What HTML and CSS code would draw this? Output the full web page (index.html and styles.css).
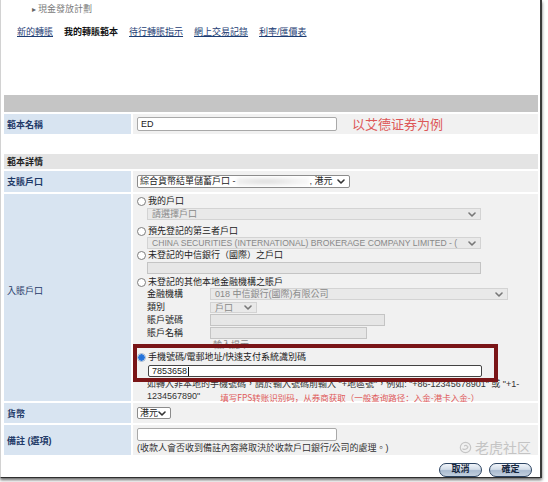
FILE: index.html
```html
<!DOCTYPE html>
<html>
<head>
<meta charset="utf-8">
<link rel="stylesheet" href="styles.css">
</head>
<body>
<div class="frame">
  <div class="crumb"><span class="tri">&#9656;</span>現金發放計劃</div>
  <nav class="tabs">
    <a class="tab">新的轉賬</a>
    <span class="tab cur">我的轉賬範本</span>
    <a class="tab">待行轉賬指示</a>
    <a class="tab">網上交易記錄</a>
    <a class="tab">利率/匯價表</a>
  </nav>

  <table class="form">
    <colgroup><col class="c1"><col class="c2"></colgroup>
    <tr class="hdr"><td colspan="2"></td></tr>
    <tr class="r-name">
      <th class="lbl">範本名稱</th>
      <td class="val"><div class="line"><span class="inp w200">ED</span><span class="ann">以艾德证券为例</span></div></td>
    </tr>
    <tr class="spacer"><td colspan="2"></td></tr>
    <tr class="sub"><td colspan="2">範本詳情</td></tr>
    <tr class="r-pay">
      <th class="lbl">支賬戶口</th>
      <td class="val">
        <div class="sel pay"><span class="seltxt">綜合貨幣結單儲蓄戶口 -<span class="blur"></span>, 港元</span><svg class="chev" viewBox="0 0 8 5" width="8" height="5"><polyline points="1,1 4,4 7,1"/></svg></div>
      </td>
    </tr>
    <tr class="r-recv">
      <th class="lbl recvl">入賬戶口</th>
      <td class="val top">
        <div class="recv">
          <div class="opt o1"><span class="rad"></span>我的戶口</div>
          <div class="box dis w334 b1"><span>請選擇戶口</span><svg class="chev lt" viewBox="0 0 8 5" width="8" height="5"><polyline points="1,1 4,4 7,1"/></svg></div>
          <div class="opt o2"><span class="rad"></span>預先登記的第三者戶口</div>
          <div class="box dis w334"><span class="lat">CHINA SECURITIES (INTERNATIONAL) BROKERAGE COMPANY LIMITED - (</span><svg class="chev lt" viewBox="0 0 8 5" width="8" height="5"><polyline points="1,1 4,4 7,1"/></svg></div>
          <div class="opt"><span class="rad"></span>未登記的中信銀行（國際）之戶口</div>
          <div class="box dis w334 b3"></div>
          <div class="opt o4"><span class="rad"></span>未登記的其他本地金融機構之賬戶</div>
          <div class="fi">
            <div class="fl">金融機構</div>
            <div class="box dis wfin"><span>018 中信銀行(國際)有限公司</span><svg class="chev lt" viewBox="0 0 8 5" width="8" height="5"><polyline points="1,1 4,4 7,1"/></svg></div>
            <div class="fl">類別</div>
            <div class="box dis wtype"><span>戶口</span><svg class="chev lt" viewBox="0 0 8 5" width="8" height="5"><polyline points="1,1 4,4 7,1"/></svg></div>
            <div class="fl">賬戶號碼</div>
            <div class="box dis wno"></div>
            <div class="fl">賬戶名稱</div>
            <div class="box dis wnm"></div>
          </div>
          <div class="tip">輸入提示</div>
          <div class="opt o5"><span class="rad on"></span>手機號碼/電郵地址/快速支付系統識別碼</div>
          <div class="fps"><span>7853658</span><span class="caret"></span></div>
          <div class="hint h1">如轉入非本地的手機號碼，請於輸入號碼前輸入 "+地區號"，例如: "+86-12345678901" 或 "+1-</div>
          <div class="hint h2">1234567890"<span class="ann2">填写FPS转账识别码，从券商获取（一般查询路径：入金-港卡入金-）</span></div>
          <div class="redbox"></div>
        </div>
      </td>
    </tr>
    <tr class="r-cur">
      <th class="lbl">貨幣</th>
      <td class="val"><div class="sel cur"><span>港元</span><svg class="chev" viewBox="0 0 8 5" width="8" height="5"><polyline points="1,1 4,4 7,1"/></svg></div></td>
    </tr>
    <tr class="r-rmk">
      <th class="lbl">備註 (選項)</th>
      <td class="val top">
        <div class="inp w200 rmk"></div>
        <div class="rmk-note">(收款人會否收到備註內容將取決於收款戶口銀行/公司的處理。)</div>
      </td>
    </tr>
  </table>

  <div class="btns">
    <span class="btn">取消</span>
    <span class="btn">確定</span>
  </div>

  <div class="wm">
    <svg viewBox="0 0 14 14" width="13" height="13"><circle cx="7" cy="7" r="5.6" fill="none" stroke="#c6c6c6" stroke-width="1.3"/><path d="M4.2 8.6 C5.5 9.6 8.6 9.2 9.6 6.4 M6 5.2 C7 4.4 8.4 4.6 8.8 5.6" fill="none" stroke="#c6c6c6" stroke-width="1.3" stroke-linecap="round"/></svg>
    <span>老虎社区</span>
  </div>
</div>
</body>
</html>
```

FILE: styles.css
```css
* { box-sizing: border-box; margin: 0; padding: 0; }
html, body { background: #fff; }
body {
  width: 548px;
  height: 482px;
  overflow: hidden;
  font-family: "Liberation Sans", "Noto Sans CJK TC", sans-serif;
  font-size: 9px;
  color: #222;
}
.frame {
  position: relative;
  width: 542px;
  height: 478px;
  border-left: 1px solid #d2d2d2;
  border-right: 2px solid #3a3a3a;
  border-bottom: 1px solid #2e2e2e;
  box-shadow: 0 2px 3px rgba(0, 0, 0, 0.6);
}
.crumb {
  height: 19px;
  line-height: 19px;
  padding-left: 31px;
  color: #7a7a7a;
  font-size: 9px;
}
.tri { color: #666; font-size: 8px; margin-right: 2px; }
.tabs {
  display: flex;
  gap: 11px;
  margin-top: 4px;
  height: 18px;
  line-height: 18px;
  padding-left: 16px;
}
.tab { color: #1d3d74; text-decoration: underline; }
.tab.cur { color: #111; text-decoration: none; font-weight: bold; }

.form {
  border-collapse: separate;
  border-spacing: 2px;
  table-layout: fixed;
  width: 538px;
  margin: 52px 0 0 1px;
}
.form col.c1 { width: 127px; }
.form col.c2 { width: 405px; }
.form th, .form td { padding: 0; }
.form .hdr td { height: 17px; background: #c5c5c5; }
.form .spacer td { height: 16px; background: #fff; }
.form .sub td {
  height: 15px;
  background: #e4e4e4;
  font-weight: bold;
  color: #1e1e1e;
  padding-left: 3px;
}
.form .lbl {
  background: #d8e4f1;
  color: #1f3a68;
  text-align: left;
  font-weight: bold;
  padding-left: 3px;
  vertical-align: middle;
}
.form .val { background: #f1f1f1; padding-left: 4px; vertical-align: middle; }
.form .val.top { vertical-align: top; }
.form .r-name td, .form .r-name th { height: 20px; }
.form .r-pay td, .form .r-pay th { height: 21px; }
.form .r-cur td, .form .r-cur th { height: 20px; }
.form .r-rmk td, .form .r-rmk th { height: 30px; }
.form .recvl { padding-bottom: 15px; font-weight: normal; color: #1f3a68; }

.line { display: flex; align-items: center; }
.inp {
  display: block;
  height: 14px;
  line-height: 12px;
  background: #fff;
  border: 1px solid #a9a9a9;
  border-radius: 2px;
  padding-left: 3px;
  color: #222;
}
.w200 { width: 200px; }
.ann {
  margin-left: 15px;
  font-family: "Noto Sans CJK SC", sans-serif;
  font-size: 13px;
  line-height: 14px;
  color: #dd5757;
}
.sel {
  display: flex;
  align-items: center;
  justify-content: space-between;
  height: 13px;
  background: #fff;
  border: 1px solid #8c8c8c;
  border-radius: 2px;
  padding: 0 4px 0 2px;
  line-height: 11px;
  white-space: nowrap;
  overflow: hidden;
}
.sel.pay { width: 213px; }
.sel.cur { width: 34px; height: 12px; }
.seltxt { display: flex; align-items: center; }
.blur {
  display: inline-block;
  width: 72px;
  height: 9px;
  margin: 0 1px;
  background: radial-gradient(ellipse at 40% 50%, #dcdcdc 0, #f4f4f4 60%, #fff 100%);
  filter: blur(1.5px);
}
.chev { flex: none; }
.chev polyline { fill: none; stroke: #333; stroke-width: 1.6; stroke-linecap: round; stroke-linejoin: round; }
.chev.lt polyline { stroke: #777; }

.recv { position: relative; padding-top: 1px; }
.opt {
  display: flex;
  align-items: center;
  height: 12px;
  line-height: 12px;
  white-space: nowrap;
  color: #222;
}
.o2 { margin-top: 5px; }
.o4 { margin-top: 2px; }
.rad {
  display: inline-block;
  flex: none;
  width: 9px;
  height: 9px;
  border: 1px solid #7d7d7d;
  border-radius: 50%;
  background: #fff;
  margin-right: 2px;
}
.rad.on {
  border-color: #9fb4d0;
  background: radial-gradient(circle, #1f6fd8 0, #2a78de 3px, #d6e4f6 3.6px);
}
.box {
  display: flex;
  align-items: center;
  justify-content: space-between;
  height: 12px;
  line-height: 10px;
  padding: 0 4px 0 4px;
  white-space: nowrap;
  overflow: hidden;
}
.dis { background: #e9e9e9; border: 1px solid #d3d3d3; color: #888; }
.b1 { margin-top: 1px; }
.b3 { margin-top: 1px; background: #e6e6e6; border-color: #c4c4c4; }
.w334 { width: 334px; margin-left: 10px; }
.lat { font-size: 8.6px; letter-spacing: 0; }
.fi {
  display: grid;
  grid-template-columns: 63px auto;
  grid-auto-rows: 13px;
  margin-left: 10px;
  align-items: start;
}
.fl { line-height: 13px; color: #222; }
.wfin { width: 298px; }
.wtype { width: 47px; height: 11px; margin-top: 1px; }
.wno { width: 175px; background: #e6e6e6; border-color: #c4c4c4; }
.wnm { width: 157px; background: #e6e6e6; border-color: #c4c4c4; }
.tip { height: 11px; line-height: 11px; padding-left: 76px; color: #888; }
.fps {
  display: flex;
  align-items: center;
  width: 334px;
  height: 12px;
  margin: 2px 0 0 11px;
  background: #fff;
  border: 1px solid #444;
  border-radius: 2px;
  padding-left: 3px;
  line-height: 10px;
}
.caret { display: inline-block; width: 1px; height: 9px; background: #111; margin-left: 1px; }
.hint { padding-left: 10px; color: #333; white-space: nowrap; }
.h1 { height: 12px; line-height: 12px; margin-top: 1px; }
.h2 { height: 11px; line-height: 11px; }
.ann2 {
  margin-left: 20px;
  font-family: "Noto Sans CJK SC", sans-serif;
  font-size: 8.5px;
  color: #df5a5a;
  position: relative;
  top: 2px;
}
.redbox {
  position: absolute;
  left: -4px;
  top: 150px;
  width: 365px;
  height: 38px;
  border: 4px solid #7a1517;
}
.rmk { margin-top: 3px; height: 13px; }
.rmk-note { line-height: 12px; margin-top: 1px; color: #333; white-space: nowrap; }

.btns {
  display: flex;
  justify-content: flex-end;
  gap: 7px;
  margin-top: 6px;
  padding-right: 8px;
}
.btn {
  display: block;
  width: 43px;
  height: 14px;
  line-height: 11px;
  text-align: center;
  border: 1.5px solid #2c4462;
  border-radius: 7px;
  background: linear-gradient(#f1f5fa 0%, #d2dce8 45%, #a9bbd0 55%, #c3d0de 100%);
  font-weight: bold;
  color: #16263d;
  font-size: 9px;
}
.wm {
  position: absolute;
  left: 458px;
  top: 439px;
  display: flex;
  align-items: center;
  gap: 3px;
  color: #c4c4c4;
  font-family: "Noto Sans CJK SC", sans-serif;
  font-size: 14px;
  line-height: 16px;
}
```
